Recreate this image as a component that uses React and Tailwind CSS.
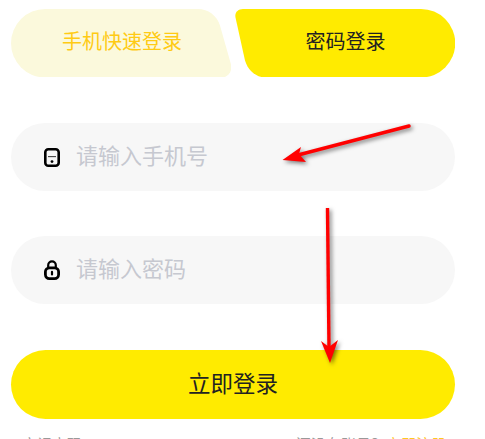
import React from "react";

const font = "font-['Noto_Sans_CJK_SC','Noto_Sans',sans-serif]";

const PhoneIcon = () => (
  <svg width="16" height="19" viewBox="0 0 16 19" fill="none" className="shrink-0">
    <rect x="1.3" y="1.3" width="13.4" height="16.4" rx="3" stroke="#000" strokeWidth="2.6" />
    <path d="M4 8.6H12" stroke="#444" strokeWidth="1.1" />
    <circle cx="8" cy="13.6" r="1.4" fill="#000" />
  </svg>
);

const LockIcon = () => (
  <svg width="16" height="20" viewBox="0 0 16 20" fill="none" className="shrink-0">
    <path d="M4.2 8V5.2a3.8 3.8 0 0 1 7.6 0V8" stroke="#000" strokeWidth="2.2" />
    <rect x="1.4" y="7.8" width="13.2" height="10.8" rx="4" stroke="#000" strokeWidth="2.8" />
    <rect x="6.9" y="10.8" width="2.2" height="4.8" rx="1.1" fill="#000" />
  </svg>
);

const Field = ({ icon, placeholder }) => (
  <div className="flex h-[68px] items-center rounded-[34px] bg-[#f7f7f7] pl-[33px]">
    {icon}
    <span className="mb-[7px] ml-[16px] text-[22px] leading-none text-[#c6c8d0]">{placeholder}</span>
  </div>
);

export default function App() {
  return (
    <div className={`relative h-[439px] w-[485px] overflow-hidden bg-white pl-[11px] pt-[8.5px] ${font}`}>
      <div className="w-[444px]">
        {/* tabs */}
        <div className="flex gap-[4px]">
          <div className="relative flex h-[68.5px] w-[220px] items-center justify-center">
            <svg className="absolute inset-0" width="220" height="68.5" viewBox="0 0 220 68.5">
              <path
                d="M34.25 0H187C197 0 206 6.5 209 16.5L220 55.5C221.5 62.5 217 68.5 211 68.5H34.25A34.25 34.25 0 0 1 34.25 0Z"
                fill="#fbf9dc"
              />
            </svg>
            <span className="relative mb-[3px] pl-[2px] text-[20px] text-[#ffcb14]">手机快速登录</span>
          </div>
          <div className="relative flex h-[68.5px] w-[220px] items-center justify-center">
            <svg className="absolute inset-0" width="220" height="68.5" viewBox="0 0 220 68.5">
              <path
                d="M8 0H186A34.25 34.25 0 0 1 186 68.5H31C21 68.5 13 61.5 10 51.5L0.5 8.5C-0.5 3.5 3 0 8 0Z"
                fill="#ffeb00"
              />
            </svg>
            <span className="relative mb-[3px] pl-[1px] text-[20px] text-[#222]">密码登录</span>
          </div>
        </div>

        {/* form */}
        <div className="mt-[46px] flex flex-col gap-[45px]">
          <Field icon={<PhoneIcon />} placeholder="请输入手机号" />
          <Field icon={<LockIcon />} placeholder="请输入密码" />
        </div>
        <button className="mt-[46px] flex h-[69px] w-full items-center justify-center rounded-[34.5px] bg-[#ffeb00] pb-[3px] text-[22.5px] text-[#222]">
          立即登录
        </button>

        <div className="mt-[15px] flex justify-between pl-[11px] pr-[9px] text-[15px] leading-[20px] text-[#999]">
          <span>忘记密码</span>
          <span>
            还没有账号？<span className="text-[#ffc81e]">立即注册</span>
          </span>
        </div>
      </div>

      {/* red annotation arrows */}
      <svg
        className="pointer-events-none absolute inset-0 drop-shadow-[2px_2px_2px_rgba(0,0,0,0.5)]"
        width="485"
        height="439"
        viewBox="0 0 485 439"
      >
        <path d="M409 126L298 155" stroke="#ff0000" strokeWidth="3.4" strokeLinecap="round" />
        <path d="M282.5 160L301 147L299 154L306 162Z" fill="#ff0000" />
        <path d="M327.5 208L329 348" stroke="#ff0000" strokeWidth="3.4" />
        <path d="M330 363L321 341L329 347L338 340Z" fill="#ff0000" />
      </svg>
    </div>
  );
}
